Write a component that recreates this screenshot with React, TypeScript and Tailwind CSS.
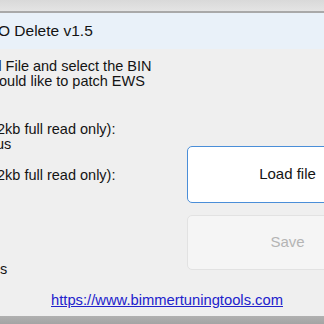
export default function App() {
  return (
    <div
      className="w-[324px] h-[324px] overflow-hidden flex flex-col bg-[#efefef] text-[#141414]"
      style={{ fontFamily: '"Liberation Sans", Arial, sans-serif' }}
    >
      {/* window chrome */}
      <div className="h-[11px] shrink-0 bg-gradient-to-b from-[#d9d9d9] to-[#e4e4e4]" />
      <div className="h-[2px] shrink-0 bg-[#a9a9a9]" />

      {/* title band */}
      <div className="h-[36px] shrink-0 flex items-center bg-[#e9f1f9]">
        <span className="-ml-[2px] text-[15.5px] whitespace-nowrap">O Delete v1.5</span>
      </div>

      {/* body */}
      <div className="h-[267px] shrink-0 flex flex-col pt-[10px]">
        <div className="text-[14.5px] leading-[15px] whitespace-nowrap">
          <p className="-ml-[6.5px]">d File and select the BIN</p>
          <p className="-ml-[1px]">ould like to patch EWS</p>
        </div>

        <div className="flex">
          <div className="w-[187px] shrink-0 text-[14.5px] leading-[15px] whitespace-nowrap pt-[33px]">
            <p className="-ml-[3px]">2kb full read only):</p>
            <p className="-ml-[4px]">us</p>
            <p className="-ml-[3px] mt-[16px]">2kb full read only):</p>
            <p className="mt-[79px]">s</p>
          </div>

          <div className="flex flex-col gap-[12px] pt-[57px] shrink-0">
            <button className="w-[201px] h-[57px] rounded-[5px] border-[1.5px] border-[#4a8ed8] bg-white text-[15px] text-[#141414]">
              Load file
            </button>
            <button
              disabled
              className="w-[201px] h-[55px] rounded-[5px] border border-[#e2e2e2] bg-[#f5f5f5] text-[15px] text-[#b4b4b4]"
            >
              Save
            </button>
          </div>
        </div>

        <a
          href="#"
          className="mt-[14px] ml-[51px] text-[14.75px] leading-[18px] text-[#2222cc] underline whitespace-nowrap"
        >
          https://www.bimmertuningtools.com
        </a>
      </div>

      {/* bottom bar */}
      <div className="flex-1 bg-gradient-to-b from-[#b0b0b0] to-[#a4a4a4]" />
    </div>
  );
}
